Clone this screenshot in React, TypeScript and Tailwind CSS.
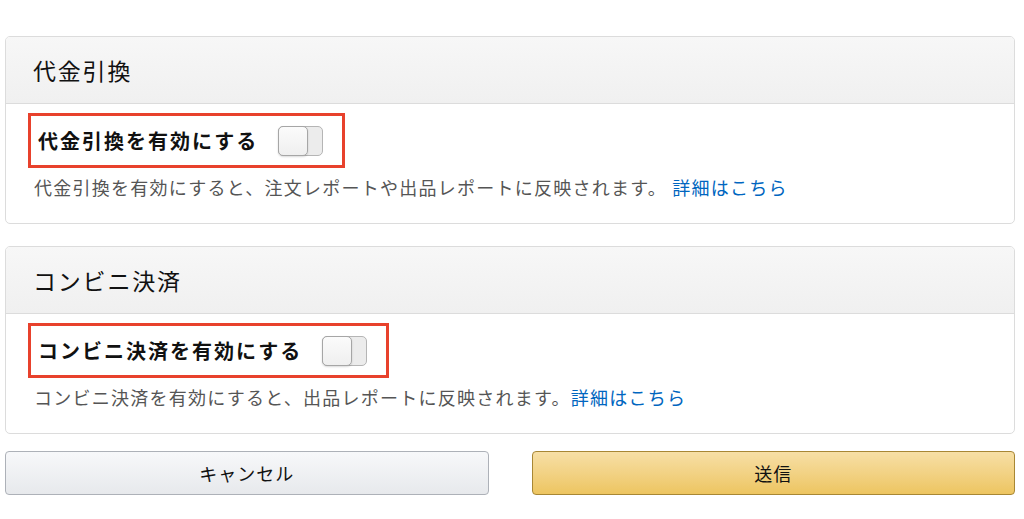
const font = { fontFamily: '"Noto Sans CJK JP", "Noto Sans", sans-serif' };

function Toggle() {
  return (
    <div className="relative w-[45px] h-[30px] rounded-[5px] border border-[#b5b5b5] bg-[#ececec] shrink-0">
      <div className="absolute left-[-1px] top-[-1px] w-[30px] h-[30px] rounded-[5px] border border-[#a6a6a6] bg-gradient-to-b from-[#fbfbfb] to-[#efefef] shadow-[0_1px_2px_rgba(0,0,0,0.15)]" />
    </div>
  );
}

function Section({ title, label, desc, spaced }: { title: string; label: string; desc: string; spaced?: boolean }) {
  return (
    <div className="border border-[#dcdcdc] rounded-[5px] overflow-hidden">
      <div className="h-[67px] flex items-center px-[27px] bg-gradient-to-b from-[#f7f7f7] to-[#f0f0f0] border-b border-[#dcdcdc]">
        <h2 className="text-[23px] tracking-[1.8px] text-[#111]">{title}</h2>
      </div>
      <div className="px-[22px] pt-[9px] pb-[23px]">
        <div className="inline-flex items-center gap-[20px] border-[3px] border-[#e8412c] pl-[7px] pr-[19px] py-[9.5px]">
          <span className="text-[20px] font-semibold tracking-[2px] text-[#111]">{label}</span>
          <Toggle />
        </div>
        <p className="pl-[6px] mt-[6px] text-[18px] leading-[26px] tracking-[1.25px] text-[#555]">
          {desc}
          {spaced ? ' ' : ''}
          <a className="text-[#0066c0]">詳細はこちら</a>
        </p>
      </div>
    </div>
  );
}

export default function App() {
  return (
    <div className="min-h-screen bg-white pt-[36px] pl-[5px] pr-[9px]" style={font}>
      <Section
        title="代金引換"
        label="代金引換を有効にする"
        desc="代金引換を有効にすると、注文レポートや出品レポートに反映されます。"
        spaced
      />
      <div className="h-[22px]" />
      <Section
        title="コンビニ決済"
        label="コンビニ決済を有効にする"
        desc="コンビニ決済を有効にすると、出品レポートに反映されます。"
      />
      <div className="grid grid-cols-2 gap-[43px] mt-[17px]">
        <button className="h-[44px] rounded-[4px] border border-[#adb1b8] bg-gradient-to-b from-[#f7f8fa] to-[#e7e9ec] text-[18px] tracking-[1px] text-[#111]">
          キャンセル
        </button>
        <button className="h-[44px] rounded-[4px] border border-[#a88734] bg-gradient-to-b from-[#f7dfa5] to-[#edc560] text-[18px] tracking-[1px] text-[#111]">
          送信
        </button>
      </div>
    </div>
  );
}
